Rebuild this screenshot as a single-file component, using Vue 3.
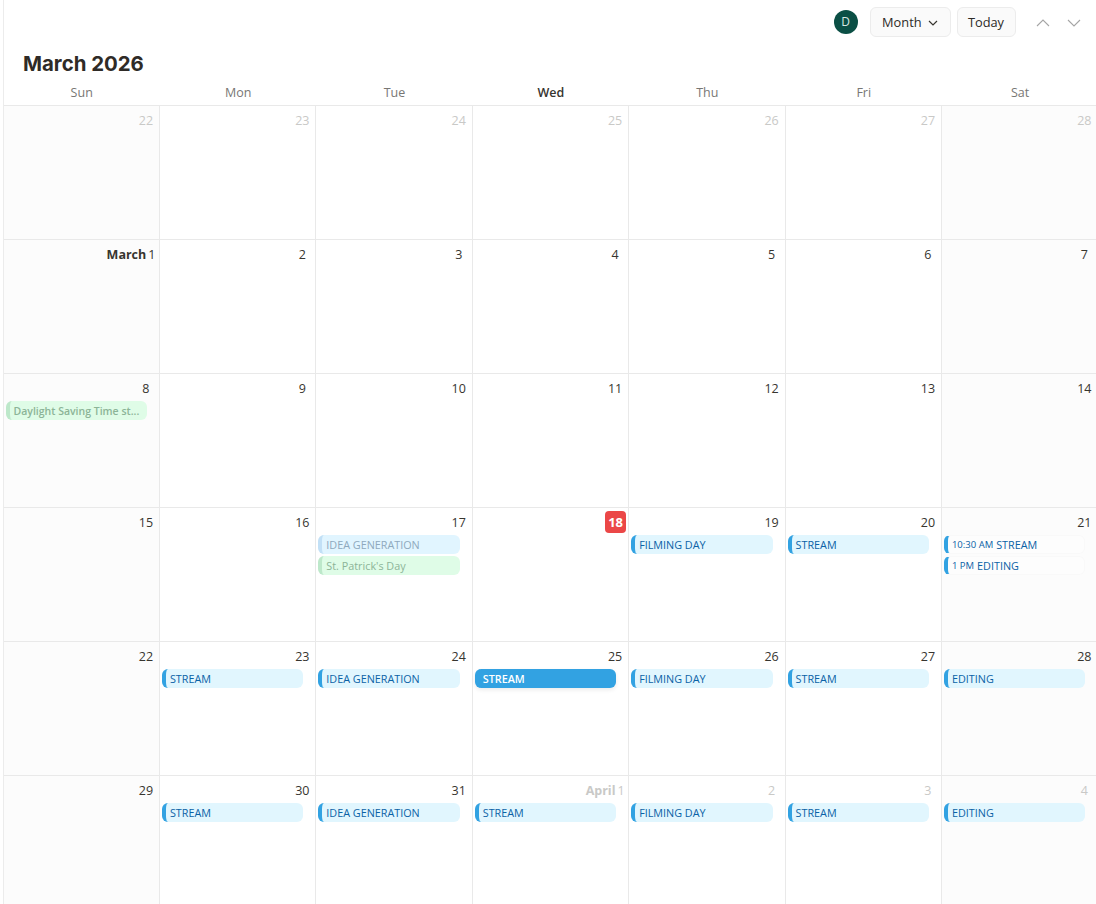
<template>
  <div class="calendar">
    <div class="toolbar">
      <div class="avatar">D</div>
      <button class="btn btn-month">
        Month
        <svg class="caret" width="10" height="6" viewBox="0 0 10 6"><path d="M1 1l4 4 4-4" /></svg>
      </button>
      <button class="btn btn-today">Today</button>
      <button class="nav-btn">
        <svg width="14" height="8" viewBox="0 0 14 8"><path d="M1 7l6-6 6 6" /></svg>
      </button>
      <button class="nav-btn">
        <svg width="14" height="8" viewBox="0 0 14 8"><path d="M1 1l6 6 6-6" /></svg>
      </button>
    </div>

    <h1 class="title">March 2026</h1>

    <div class="weekdays">
      <div v-for="day in weekdays" :key="day" class="weekday" :class="{ current: day === 'Wed' }">{{ day }}</div>
    </div>

    <div class="grid">
      <div
        v-for="(cell, i) in cells"
        :key="i"
        class="cell"
        :class="{ weekend: i % 7 === 0 || i % 7 === 6 }"
      >
        <div class="date" :class="{ muted: cell.muted }">
          <span v-if="cell.today" class="num today-badge">{{ cell.label }}</span>
          <template v-else-if="cell.month">
            <b class="month-name">{{ cell.month }}</b>
            <span class="first-day">{{ cell.label }}</span>
          </template>
          <span v-else class="num">{{ cell.label }}</span>
        </div>
        <div
          v-for="ev in cell.events"
          :key="ev.title"
          class="chip"
          :class="ev.type"
        >
          <span v-if="ev.time" class="time">{{ ev.time }}</span>
          <span class="chip-title">{{ ev.title }}</span>
        </div>
      </div>
    </div>
  </div>
</template>

<script setup>
const weekdays = ['Sun', 'Mon', 'Tue', 'Wed', 'Thu', 'Fri', 'Sat']

const stream = { title: 'STREAM', type: 'blue' }
const idea = { title: 'IDEA GENERATION', type: 'blue' }
const filming = { title: 'FILMING DAY', type: 'blue' }
const editing = { title: 'EDITING', type: 'blue' }

const cells = [
  ...[22, 23, 24, 25, 26, 27, 28].map((n) => ({ label: n, muted: true })),
  { label: 1, month: 'March' },
  ...[2, 3, 4, 5, 6, 7].map((n) => ({ label: n })),
  { label: 8, events: [{ title: 'Daylight Saving Time st...', type: 'green faded bold' }] },
  ...[9, 10, 11, 12, 13, 14].map((n) => ({ label: n })),
  { label: 15 },
  { label: 16 },
  {
    label: 17,
    events: [
      { title: 'IDEA GENERATION', type: 'blue faded' },
      { title: "St. Patrick's Day", type: 'green faded' },
    ],
  },
  { label: 18, today: true },
  { label: 19, events: [filming] },
  { label: 20, events: [stream] },
  {
    label: 21,
    events: [
      { title: 'STREAM', time: '10:30 AM', type: 'outline' },
      { title: 'EDITING', time: '1 PM', type: 'outline' },
    ],
  },
  { label: 22 },
  { label: 23, events: [stream] },
  { label: 24, events: [idea] },
  { label: 25, events: [{ title: 'STREAM', type: 'solid' }] },
  { label: 26, events: [filming] },
  { label: 27, events: [stream] },
  { label: 28, events: [editing] },
  { label: 29 },
  { label: 30, events: [stream] },
  { label: 31, events: [idea] },
  { label: 1, month: 'April', muted: true, events: [stream] },
  { label: 2, muted: true, events: [filming] },
  { label: 3, muted: true, events: [stream] },
  { label: 4, muted: true, events: [editing] },
]
</script>

<style>
html,
body {
  margin: 0;
  background: #fff;
  overflow: hidden;
}
</style>

<style scoped>
.calendar {
  height: 904px;
  overflow: hidden;
  margin-left: 2.5px;
  border-left: 1px solid #ececec;
  font-family: "Open Sans", "Noto Sans", sans-serif;
  color: #37352f;
  background: #fff;
}

.toolbar {
  display: flex;
  align-items: center;
  height: 44px;
  padding-right: 6.5px;
  justify-content: flex-end;
}

.avatar {
  width: 24px;
  height: 24px;
  border-radius: 50%;
  background: #0b4f45;
  color: #d8e8e2;
  font-size: 12px;
  line-height: 24px;
  text-align: center;
  margin-right: 12px;
}

.btn {
  height: 30px;
  box-sizing: border-box;
  border: 1px solid #ececec;
  border-radius: 6px;
  background: #fafafa;
  color: #2c2a27;
  font-family: inherit;
  font-size: 12.8px;
  font-weight: 500;
  padding: 0;
}

.btn-month {
  width: 81px;
  margin-right: 6px;
}

.btn-today {
  width: 59px;
  margin-right: 12px;
}

.caret {
  margin-left: 3px;
  vertical-align: 1px;
}

.caret path {
  fill: none;
  stroke: #37352f;
  stroke-width: 1.2;
}

.nav-btn {
  width: 31px;
  height: 30px;
  padding: 0;
  border: none;
  background: none;
}

.nav-btn path {
  fill: none;
  stroke: #a5a5a5;
  stroke-width: 1.1;
}

.title {
  margin: 0;
  padding-left: 19.5px;
  height: 37px;
  font-family: Inter, sans-serif;
  font-size: 20.4px;
  font-weight: 700;
  line-height: 40px;
  color: #2f2b27;
}

.weekdays {
  display: grid;
  grid-template-columns: repeat(7, 156.42px);
  height: 24px;
}

.weekday {
  text-align: center;
  font-size: 12.5px;
  line-height: 23px;
  color: #787774;
}

.weekday.current {
  color: #37352f;
  font-weight: 600;
}

.grid {
  display: grid;
  grid-template-columns: repeat(7, 156.42px);
  grid-auto-rows: 134px;
  border-top: 1px solid #e9e9e9;
  width: 1095px;
}

.cell {
  box-sizing: border-box;
  border-right: 1px solid #e9e9e9;
  border-bottom: 1px solid #e9e9e9;
  padding: 0 0 0 2px;
  min-width: 0;
}

.cell.weekend {
  background: #fcfcfc;
}

.date {
  box-sizing: border-box;
  display: flex;
  justify-content: flex-end;
  align-items: flex-start;
  height: 27px;
  padding: 3px 2.5px 0 0;
  font-size: 12.5px;
  line-height: 24px;
  color: #37352f;
}

.date.muted {
  color: #c9c9c7;
}

.num {
  min-width: 21px;
  text-align: center;
}

.month-name {
  font-weight: 700;
}

.first-day {
  margin-left: 2px;
  margin-right: 1px;
}

.today-badge {
  height: 22px;
  margin-right: -0.5px;
  border-radius: 4px;
  background: #eb4747;
  color: #fff;
  font-weight: 700;
  font-size: 13px;
  line-height: 22px;
}

.chip {
  box-sizing: border-box;
  display: flex;
  align-items: center;
  gap: 3px;
  width: 141.4px;
  height: 19px;
  margin-bottom: 2px;
  padding-left: 4px;
  border-left: 4px solid transparent;
  border-radius: 6px;
  font-size: 10.8px;
  font-weight: 500;
  white-space: nowrap;
  overflow: hidden;
}

.chip.blue {
  background: #e1f6fe;
  border-left-color: #32a2e2;
  color: #0b62a6;
}

.chip.blue.faded {
  background: #e1f5ff;
  border-left-color: #c2e0f6;
  color: #8ea9bd;
}

.chip.green {
  background: #dffce7;
  border-left-color: #bde8ca;
  color: #8cb497;
}

.chip.bold {
  font-size: 10.5px;
  font-weight: 600;
}

.chip.solid {
  background: #32a2e2;
  border-left-color: #32a2e2;
  color: #fff;
  font-weight: 600;
  box-shadow: 0 2px 4px rgba(0, 0, 0, 0.08);
}

.chip.outline {
  background: #fdfdfd;
  border: 1px solid #f9f9f9;
  border-left: 4px solid #32a2e2;
  color: #0b62a6;
}

.time {
  font-size: 9.5px;
  font-weight: 400;
}
</style>
